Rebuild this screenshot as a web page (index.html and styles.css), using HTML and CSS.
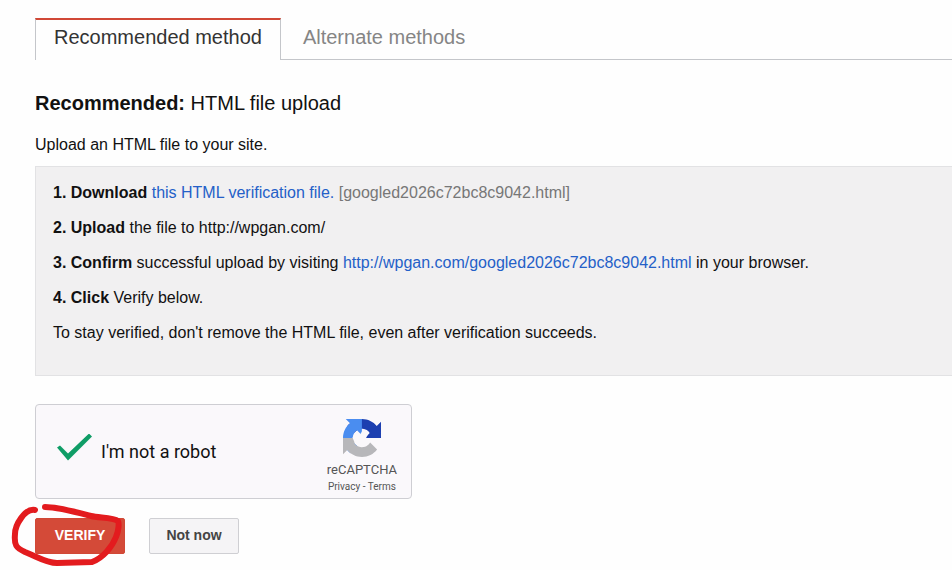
FILE: index.html
```html
<!DOCTYPE html>
<html lang="en">
<head>
<meta charset="utf-8">
<title>Site verification</title>
<link rel="stylesheet" href="styles.css">
</head>
<body>
<main class="page">
  <nav class="tabs">
    <a class="tab tab-active" href="#recommended">Recommended method</a>
    <a class="tab" href="#alternate">Alternate methods</a>
  </nav>
  <h1 class="title"><strong>Recommended:</strong> HTML file upload</h1>
  <p class="intro">Upload an HTML file to your site.</p>
  <section class="steps">
    <p><strong>1. Download</strong> <a href="#file">this HTML verification file.</a> <span class="filename">[googled2026c72bc8c9042.html]</span></p>
    <p><strong>2. Upload</strong> the file to http://wpgan.com/</p>
    <p><strong>3. Confirm</strong> successful upload by visiting <a href="#visit">http://wpgan.com/googled2026c72bc8c9042.html</a> in your browser.</p>
    <p><strong>4. Click</strong> Verify below.</p>
    <p>To stay verified, don't remove the HTML file, even after verification succeeds.</p>
  </section>
  <form class="form">
    <div class="captcha">
      <div class="robot">
        <input class="check" type="checkbox" id="robot" checked>
        <label for="robot">I'm not a robot</label>
      </div>
      <div class="brand">
        <svg class="logo" viewBox="0 0 64 64" aria-hidden="true">
          <path fill="#1c3fb0" d="M64 31.955l-.033-1.37V4.687l-7.16 7.16C50.948 4.674 42.033.093 32.05.093c-10.4 0-19.622 4.96-25.458 12.64l11.736 11.86a15.55 15.55 0 0 1 4.754-5.334c2.05-1.6 4.952-2.906 8.968-2.906.485 0 .86.057 1.135.163 4.976.393 9.288 3.14 11.828 7.124l-8.307 8.307L64 31.953"/>
          <path fill="#4a8df0" d="M31.862.094l-1.37.033H4.594l7.16 7.16C4.58 13.147 0 22.06 0 32.046c0 10.4 4.96 19.622 12.64 25.458L24.5 45.768a15.55 15.55 0 0 1-5.334-4.754c-1.6-2.05-2.906-4.952-2.906-8.968 0-.485.057-.86.163-1.135.393-4.976 3.14-9.288 7.124-11.828l8.307 8.307L31.86.095"/>
          <path fill="#b7b7ba" d="M.001 32.045l.033 1.37v25.898l7.16-7.16c5.86 7.173 14.774 11.754 24.76 11.754 10.4 0 19.622-4.96 25.458-12.64l-11.736-11.86a15.55 15.55 0 0 1-4.754 5.334c-2.05 1.6-4.952 2.906-8.968 2.906-.485 0-.86-.057-1.135-.163-4.976-.393-9.288-3.14-11.828-7.124l8.307-8.307c-10.522.04-22.4.066-27.295-.005"/>
          <path fill="#faf8fb" d="M16 31L23 31L19 23L29 26L34 17L44 23L39 31L44 41L33 46L29 38L20 41Z"/>
        </svg>
        <span class="brand-name">reCAPTCHA</span>
        <span class="legal"><a href="#privacy">Privacy</a> - <a href="#terms">Terms</a></span>
      </div>
    </div>
    <div class="actions">
      <button class="button primary" type="button">VERIFY</button>
      <button class="button" type="button">Not now</button>
      <svg class="scribble" viewBox="0 0 116 64" aria-hidden="true">
        <path d="M24 7C14 5 4 22 4 31C3 42 5 45 14 49C27 54 35 60 46 60L81 59C92 55 101 44 105 34C108 27 108 20 107 18C102 14 88 15 80 13C65 9 47 4 34 4"/>
      </svg>
    </div>
  </form>
</main>
</body>
</html>
```
FILE: styles.css
```css
* {
  box-sizing: border-box;
}

body {
  margin: 0;
  background: #fefefe;
  color: #111;
  font: 16px/19px "Liberation Sans", Arial, sans-serif;
}

p {
  margin: 0;
}

a {
  color: #2460c8;
  text-decoration: none;
}

.page {
  padding: 18px 0 16px 35px;
}

.tabs {
  display: flex;
  border-bottom: 1px solid #c4c6ca;
}

.tab {
  padding: 6px 22px 11px;
  border-top: 2px solid transparent;
  color: #858585;
  font-size: 20px;
  line-height: 22px;
}

.tab-active {
  margin-bottom: -1px;
  padding: 6px 18px 11px;
  border: solid #c4c6ca;
  border-width: 2px 1px 0;
  border-top-color: #d14836;
  background: #fefefe;
  color: #333;
}

.title {
  margin: 31px 0 0;
  font-size: 20px;
  font-weight: 400;
  line-height: 24px;
}

.intro {
  margin: 20px 0 12px;
}

.steps {
  display: flex;
  flex-direction: column;
  gap: 16px;
  padding: 16px 17px 33px;
  border: 1px solid #e2e2e4;
  border-right: 0;
  background: #f1f0f1;
}

.filename {
  color: #777;
}

.captcha {
  display: flex;
  justify-content: space-between;
  width: 377px;
  margin-top: 28px;
  padding: 14px 14px 3px 21px;
  border: 1px solid #ceced3;
  border-radius: 4px;
  background: #faf8fb;
  font-family: Roboto, sans-serif;
}

.robot {
  display: flex;
  align-items: center;
  gap: 9px;
  padding-bottom: 12px;
  font-size: 18px;
}

.check {
  appearance: none;
  width: 35px;
  height: 27px;
  margin: 0 0 8px;
  background: #0f9d66;
  clip-path: polygon(0 14px, 3px 12px, 11px 20px, 32px 0, 35px 3px, 11px 27px);
}

.brand {
  display: flex;
  flex-direction: column;
  align-items: center;
  color: #555;
}

.logo {
  width: 38px;
  height: 38px;
}

.brand-name {
  margin-top: 5px;
  font-size: 13px;
  line-height: 16px;
}

.legal {
  font-size: 10px;
  line-height: 17px;
}

.legal a {
  color: inherit;
}

.actions {
  position: relative;
  display: flex;
  gap: 24px;
  margin-top: 19px;
}

.button {
  width: 90px;
  height: 36px;
  padding: 0 0 2px;
  border: 1px solid #cfcfd3;
  border-radius: 2px;
  background: #f5f4f6;
  color: #444;
  font: bold 14px/16px "Liberation Sans", Arial, sans-serif;
}

.primary {
  border-color: #d14836;
  background: #d44a38;
  color: #fff;
}

/* Hand-drawn ring around the primary button */
.scribble {
  position: absolute;
  top: -15px;
  left: -24px;
  width: 116px;
  height: 64px;
  overflow: visible;
  fill: none;
  stroke: #e31b1e;
  stroke-width: 6;
  stroke-linecap: round;
  stroke-linejoin: round;
  pointer-events: none;
}
```
